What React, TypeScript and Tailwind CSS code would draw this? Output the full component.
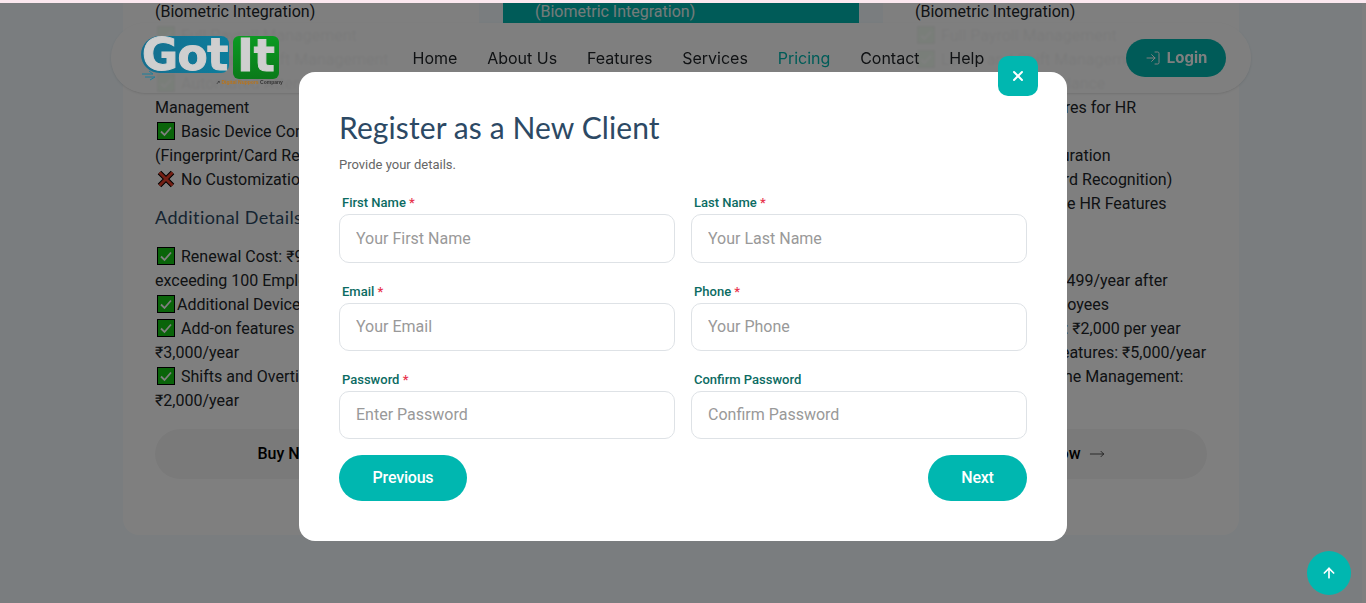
import { ArrowUp, LogIn, MoveRight, X } from "lucide-react";

const CheckIcon = () => (
  <svg width="18" height="18" viewBox="0 0 18 18" className="inline-block align-[-3px]">
    <rect x="0.5" y="0.5" width="17" height="17" fill="#14c814" stroke="#000" />
    <path d="M4 9.5 L7.5 13 L14 5.5" fill="none" stroke="#fff" strokeWidth="1.8" />
  </svg>
);

const CrossIcon = () => (
  <svg width="18" height="18" viewBox="0 0 18 18" className="inline-block align-[-3px]">
    <path d="M2.5 2.5 L15.5 15.5 M15.5 2.5 L2.5 15.5" fill="none" stroke="#000" strokeWidth="5" />
    <path d="M2.5 2.5 L15.5 15.5 M15.5 2.5 L2.5 15.5" fill="none" stroke="#e8402a" strokeWidth="3" />
  </svg>
);

type Line = { icon?: "check" | "cross" | "tight"; text: string };

const basicTop: Line[] = [
  { text: "(Biometric Integration)" },
  { icon: "check", text: "Full Payroll Management" },
  { icon: "check", text: "Leave and Shift Management" },
  { icon: "check", text: "Automated Attendance" },
  { text: "Management" },
  { icon: "check", text: "Basic Device Configuration" },
  { text: "(Fingerprint/Card Recognition)" },
  { icon: "cross", text: "No Customization Features" },
];

const basicBottom: Line[] = [
  { icon: "check", text: "Renewal Cost: ₹9,999/year after" },
  { text: "exceeding 100 Employees" },
  { icon: "tight", text: "Additional Device: ₹2,000 per year" },
  { icon: "check", text: "Add-on features per device:" },
  { text: "₹3,000/year" },
  { icon: "check", text: "Shifts and Overtime Management:" },
  { text: "₹2,000/year" },
];

const premiumTop: Line[] = [
  { text: "(Biometric Integration)" },
  { icon: "check", text: "Full Payroll Management" },
  { icon: "check", text: "Leave and Shift Management" },
  { icon: "check", text: "Automated Attendance" },
  { icon: "check", text: "Employee's Features for HR" },
  { text: "Management" },
  { icon: "check", text: "All Device Configuration" },
  { text: "(Fingerprint/Face/Card Recognition)" },
  { icon: "check", text: "Fully Customizable HR Features" },
];

const premiumBottom: Line[] = [
  { icon: "check", text: "Renewal Cost: ₹9,499/year after" },
  { text: "exceeding 1000 Employees" },
  { icon: "check", text: "Additional Device: ₹2,000 per year" },
  { icon: "check", text: "Custom Add-on features: ₹5,000/year" },
  { icon: "check", text: "Shifts and Overtime Management:" },
  { text: "₹3,000/year" },
];

const TextLine = ({ line }: { line: Line }) => (
  <div className="h-6 whitespace-nowrap text-[16px] leading-6 text-[#212529]">
    {line.icon === "check" && (
      <span className="mr-[6px] ml-[2px]">
        <CheckIcon />
      </span>
    )}
    {line.icon === "tight" && (
      <span className="mr-[2px] ml-[2px]">
        <CheckIcon />
      </span>
    )}
    {line.icon === "cross" && (
      <span className="mr-[6px] ml-[2px]">
        <CrossIcon />
      </span>
    )}
    {line.text}
  </div>
);

const PriceCard = ({ top, bottom }: { top: Line[]; bottom: Line[] }) => (
  <div className="h-[538px] w-[356px] shrink-0 rounded-b-2xl bg-white px-8 pt-[3px]">
    {top.map((line) => (
      <TextLine key={line.text} line={line} />
    ))}
    <h4 className="h-[53px] pt-[13px] font-['Lato','Noto_Sans',sans-serif] text-[18px] leading-6 tracking-[0.4px] text-[#2c4964]">
      Additional Details
    </h4>
    {bottom.map((line) => (
      <TextLine key={line.text} line={line} />
    ))}
    <button className="mt-[16px] flex h-[50px] w-full items-center justify-center gap-2 rounded-full bg-[#f5f5f5] text-[16px] font-medium text-black">
      Buy Now
      <MoveRight size={16} strokeWidth={1.25} className="text-[#333]" />
    </button>
  </div>
);

const FormField = ({
  label,
  placeholder,
  required,
  tall,
}: {
  label: string;
  placeholder: string;
  required?: boolean;
  tall?: boolean;
}) => (
  <div>
    <label className="block h-[19px] pl-[3px] text-[13px] leading-[15px] font-medium text-[#0b6b62]">
      {label}
      {required && <span className="text-[#e8344e]"> *</span>}
    </label>
    <input
      placeholder={placeholder}
      className={`block w-full rounded-[10px] border border-[#dee2e6] bg-white px-4 text-[16px] outline-none placeholder:text-[#999] ${
        tall ? "h-[49px]" : "h-[48px] pb-[2px]"
      }`}
    />
  </div>
);

const Logo = () => (
  <div className="absolute top-[36px] left-[141px] z-20 h-[50px] w-[140px] select-none">
    <div className="absolute top-0 left-0 flex h-[37px] w-[88px] items-center rounded-[8px] rounded-l-[19px] bg-gradient-to-r from-[#156f8f] to-[#0c7d9c] pl-[1px] font-['DejaVu_Sans',sans-serif] text-[44px] leading-none font-bold tracking-[-0.5px] text-[#cfcfcf] [-webkit-text-stroke:1px_#cfcfcf]">
      Got
    </div>
    <div className="absolute top-0 left-[92px] flex h-[43px] w-[46px] items-center justify-center rounded-[6px] bg-gradient-to-b from-[#0b9a22] to-[#0a7a1a] pb-[3px] font-['DejaVu_Sans',sans-serif] text-[44px] leading-none font-bold text-[#cfcfcf] [-webkit-text-stroke:1px_#cfcfcf]">
      It
    </div>
    <svg width="24" height="14" viewBox="0 0 24 14" className="absolute top-[32px] left-0">
      <path d="M1 6 H12 M4 9 H14 M8 3 L12 6 M9 12 L14 9" stroke="#1d7f9b" strokeWidth="1" fill="none" />
    </svg>
    <div className="absolute top-[43px] left-[75px] font-['Liberation_Sans',sans-serif] text-[5px] leading-[6px] font-bold whitespace-nowrap text-[#333]">
      ↗ <span className="text-[#b8741a]">Digital Nuppors</span> Company
    </div>
  </div>
);

export default function App() {
  const navItems = ["Home", "About Us", "Features", "Services", "Pricing", "Contact", "Help"];

  return (
    <div className="relative h-[603px] w-[1366px] overflow-hidden bg-[#f4fbff] font-['Roboto',sans-serif]">
      {/* page behind the modal, scrolled to the pricing table */}
      <div className="-mt-[3px] flex justify-center pr-[4px]">
        <PriceCard top={basicTop} bottom={basicBottom} />
        <div className="w-[404px] shrink-0 px-6">
          <div className="h-[26px] bg-[#00b7b0] pl-8 pt-[3px] text-[16px] leading-6 text-[#e8f6f5]">
            (Biometric Integration)
          </div>
        </div>
        <PriceCard top={premiumTop} bottom={premiumBottom} />
      </div>
      <div className="absolute top-0 right-0 h-full w-[4px] bg-white" />

      {/* sticky header */}
      <header className="absolute top-[23px] left-[111px] flex h-[70px] w-[1140px] items-center rounded-full bg-white/95 pr-[25px] font-['Inter',sans-serif] shadow-sm backdrop-blur-[1px]">
        <nav className="ml-[301.5px] flex gap-[29.8px] text-[16px] text-[#212529]">
          {navItems.map((item) => (
            <span key={item} className={item === "Pricing" ? "text-[#00b7b0]" : ""}>
              {item}
            </span>
          ))}
        </nav>
        <button className="ml-auto flex h-[38px] w-[100px] items-center justify-center gap-[6px] rounded-full bg-[#00b7b0] text-[15px] font-bold text-white">
          <LogIn size={16} strokeWidth={1.5} />
          Login
        </button>
      </header>

      {/* backdrop */}
      <div className="absolute inset-x-0 top-[3px] bottom-0 bg-black/50" />
      <div className="absolute inset-x-0 top-0 h-[3px] bg-[#fbe8ef]" />
      <Logo />

      {/* modal */}
      <div className="absolute top-[72px] left-[299px] z-30 h-[469px] w-[768px] rounded-2xl bg-white px-10 pt-10">
        <button className="absolute -top-4 right-[29px] flex h-10 w-10 items-center justify-center rounded-[10px] bg-[#00b7b0] text-white">
          <X size={16} strokeWidth={3} />
        </button>
        <h2 className="-mt-[1px] h-8 font-['Lato','Noto_Sans',sans-serif] text-[30px] leading-8 tracking-[0.1px] text-[#2c4964]">
          Register as a New Client
        </h2>
        <p className="mt-[12px] h-5 text-[13px] leading-5 text-[#666]">Provide your details.</p>
        <div className="mt-[20px] grid grid-cols-2 gap-x-4 gap-y-[21px]">
          <FormField label="First Name" placeholder="Your First Name" required tall />
          <FormField label="Last Name" placeholder="Your Last Name" required tall />
          <FormField label="Email" placeholder="Your Email" required />
          <FormField label="Phone" placeholder="Your Phone" required />
          <FormField label="Password" placeholder="Enter Password" required />
          <FormField label="Confirm Password" placeholder="Confirm Password" />
        </div>
        <div className="mt-4 flex justify-between">
          <button className="h-[46px] w-[128px] rounded-full bg-[#00b7b0] text-[16px] font-medium tracking-[-0.2px] text-white">
            Previous
          </button>
          <button className="h-[46px] w-[99px] rounded-full bg-[#00b7b0] text-[16px] font-medium tracking-[-0.2px] text-white">
            Next
          </button>
        </div>
      </div>

      {/* scroll to top */}
      <button className="absolute top-[551px] left-[1307px] z-30 flex h-11 w-11 items-center justify-center rounded-full bg-[#00b7b0] text-white">
        <ArrowUp size={16} strokeWidth={2.5} />
      </button>
    </div>
  );
}
